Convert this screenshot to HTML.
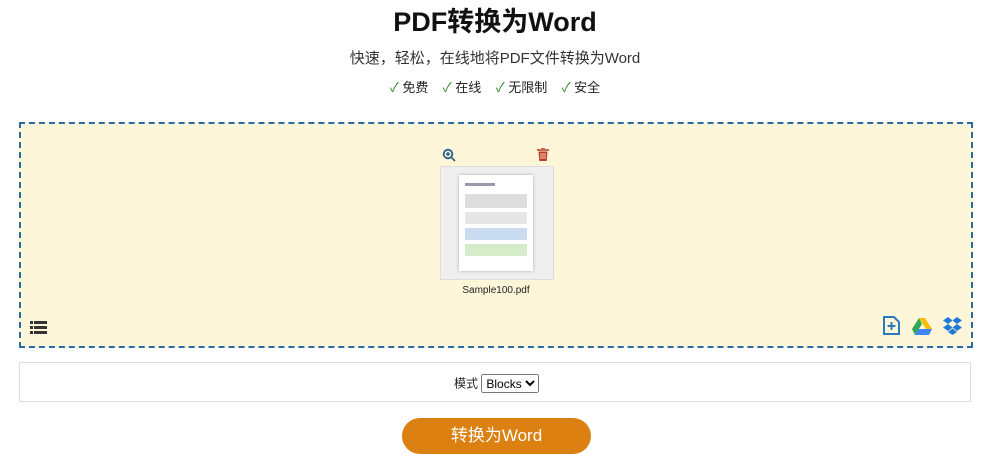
<!DOCTYPE html><html><head><meta charset="utf-8"><style>
body{margin:0;width:990px;height:467px;background:#fff;font-family:"Liberation Sans","Noto Sans CJK SC",sans-serif;position:relative;overflow:hidden}
.a{position:absolute}
h1{position:absolute;top:0px;left:0;width:990px;text-align:center;margin:0;font-size:27px;font-weight:bold;color:#111}
</style></head><body>
<h1>PDF转换为Word</h1>
<div class="a" style="top:47px;left:0;width:990px;text-align:center;font-size:15px;color:#333">快速，轻松，在线地将PDF文件转换为Word</div>
<div class="a" style="top:77px;left:0;width:990px;text-align:center;font-size:13px;color:#222;word-spacing:0"><span style="color:#2a8a2a">✓</span> 免费 &nbsp;&nbsp; <span style="color:#2a8a2a">✓</span> 在线 &nbsp;&nbsp; <span style="color:#2a8a2a">✓</span> 无限制 &nbsp;&nbsp; <span style="color:#2a8a2a">✓</span> 安全</div>
<div class="a" style="top:122px;left:19px;width:950px;height:222px;background:#fdf6d8;border:2px dashed #2b6aa8"></div>
<svg class="a" style="left:442px;top:148px" width="14" height="14" viewBox="0 0 14 14"><circle cx="6" cy="6" r="4.3" fill="none" stroke="#2b5f8a" stroke-width="1.8"/><path d="M9 9l4 4M4 6h4M6 4v4" stroke="#2b5f8a" stroke-width="1.6"/></svg>
<svg class="a" style="left:537px;top:148px" width="12" height="13" viewBox="0 0 12 13"><path d="M0 2h12M4 0h4" stroke="#c0392b" stroke-width="1.6"/><path d="M1.5 3.5h9l-.8 9.5h-7.4z" fill="#c0392b"/><path d="M4 5v6M6 5v6M8 5v6" stroke="#fdf6d8" stroke-width=".8"/></svg>
<div class="a" style="left:440px;top:166px;width:112px;height:112px;background:#efefef;border:1px solid #ddd"></div>
<div class="a" style="left:459px;top:175px;width:74px;height:96px;background:#fff;box-shadow:0 0 3px #aaa">
<div style="margin:8px 6px;height:3px;background:#99a;width:30px"></div>
<div style="margin:3px 6px;height:14px;background:#ddd"></div>
<div style="margin:4px 6px;height:12px;background:#e6e6e6"></div>
<div style="margin:4px 6px;height:12px;background:#c9dcf0"></div>
<div style="margin:4px 6px;height:12px;background:#d5ebc9"></div></div>
<div class="a" style="left:440px;top:285px;width:112px;text-align:center;font-size:10px;color:#222">Sample100.pdf</div>
<svg class="a" style="left:30px;top:321px" width="17" height="13" viewBox="0 0 17 13"><g fill="#333"><rect x="0" y="0" width="3" height="3"/><rect x="4" y="0" width="13" height="3"/><rect x="0" y="5" width="3" height="3"/><rect x="4" y="5" width="13" height="3"/><rect x="0" y="10" width="3" height="3"/><rect x="4" y="10" width="13" height="3"/></g></svg>
<svg class="a" style="left:883px;top:316px" width="17" height="19" viewBox="0 0 17 19"><path d="M1 1h10l5 5v12H1z" fill="none" stroke="#2b7ac0" stroke-width="2"/><path d="M8.5 6v8M4.5 10h8" stroke="#2b7ac0" stroke-width="2"/></svg>
<svg class="a" style="left:912px;top:318px" width="20" height="17" viewBox="0 0 20 17"><path d="M7 0h6l7 11h-6z" fill="#fbbc04"/><path d="M7 0L0 11l3 6 7-11z" fill="#34a853"/><path d="M3 17h14l3-6H6z" fill="#4285f4"/></svg>
<svg class="a" style="left:943px;top:317px" width="19" height="18" viewBox="0 0 19 18"><g fill="#1f7ad8"><path d="M5 0L0 3.5 5 7 9.5 3.5z"/><path d="M14 0l5 3.5L14 7 9.5 3.5z"/><path d="M0 10.5L5 7l4.5 3.5L5 14z"/><path d="M19 10.5L14 7l-4.5 3.5L14 14z"/><path d="M5 15l4.5-3.5L14 15l-4.5 3z"/></g></svg>
<div class="a" style="top:362px;left:19px;width:952px;height:40px;border:1px solid #ddd;box-sizing:border-box"></div>
<div class="a" style="top:374px;left:454px;font-size:12px;color:#222">模式 <select style="font-size:12px;height:19px;font-family:'Liberation Sans';width:58px"><option>Blocks</option></select></div>
<div class="a" style="top:418px;left:402px;width:189px;height:36px;border-radius:18px;background:#dd8012;color:#fff;font-size:17px;text-align:center;line-height:36px">转换为Word</div>
</body></html>
